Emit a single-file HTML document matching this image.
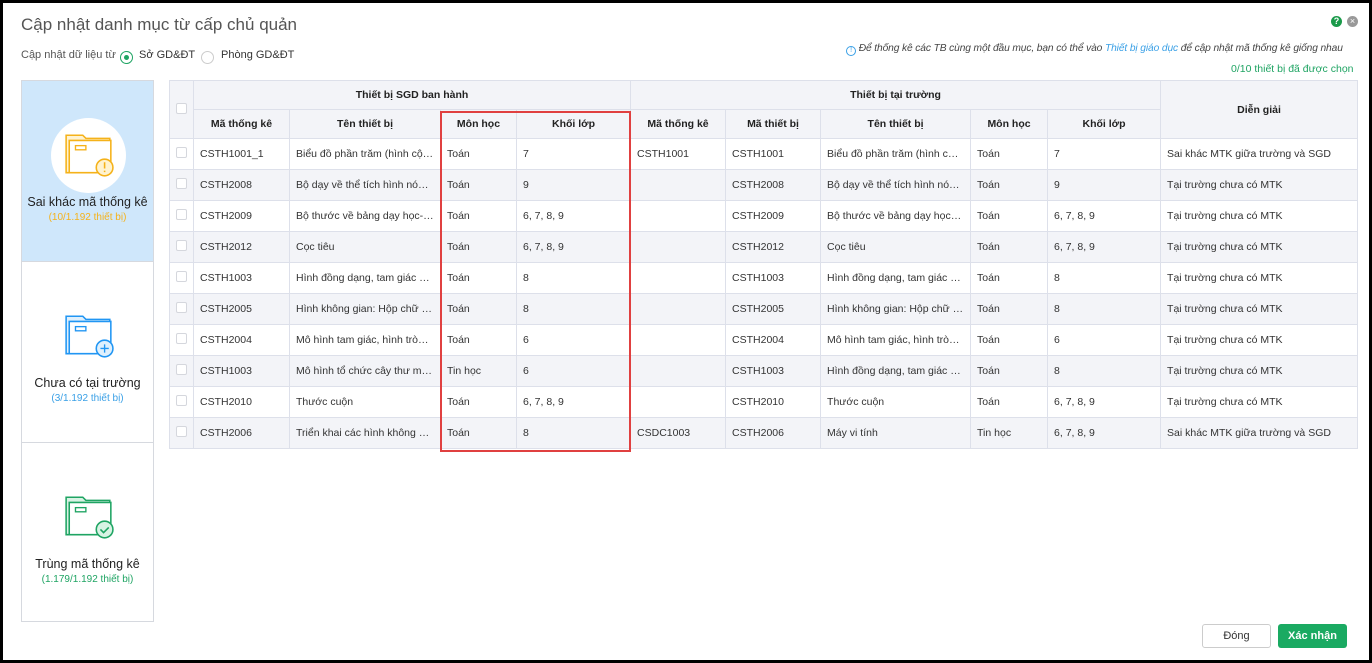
<!DOCTYPE html>
<html><head><meta charset="utf-8"><style>
*{box-sizing:border-box;margin:0;padding:0}
body{width:1372px;height:663px;background:#000;font-family:"Liberation Sans",sans-serif;position:relative;overflow:hidden}
.dlg{position:absolute;left:3px;top:3px;width:1366px;height:657px;background:#fff}
.abs{position:absolute}
.title{left:18px;top:12px;font-size:17px;color:#555}
.sub{font-size:11px;color:#555}
.radio{display:inline-block;width:13px;height:13px;border-radius:50%;border:1px solid #ccc;vertical-align:middle}
table{border-collapse:collapse;font-size:10.5px;color:#333;table-layout:fixed}
td,th{border:1px solid #dde0ea;height:31px;padding:0 6px;white-space:nowrap;overflow:hidden;text-overflow:ellipsis;text-align:left}
th{background:#f3f4f8;font-weight:bold;text-align:center;height:29px;color:#222;font-size:10.5px}
tr.alt td{background:#f3f4f8}
.cb{display:inline-block;width:11px;height:11px;border:1px solid #d5d7dd;border-radius:2px;background:#fff}
td.c{padding:0 6px}
.side{left:18px;top:77px;width:133px;height:542px;border:1px solid #d6d9df}
.sec{position:absolute;left:0;width:131px;height:180px;text-align:center}
.nm{font-size:12.5px;color:#222;position:absolute;left:0;width:100%}
.ct{font-size:10px;position:absolute;left:0;width:100%}
</style></head><body>
<div class="dlg">
<div class="abs title">Cập nhật danh mục từ cấp chủ quản</div>
<div class="abs sub" style="left:18px;top:46px">Cập nhật dữ liệu từ</div>
<div class="abs" style="left:117px;top:46px"><span class="radio" style="border-color:#1fa463;position:relative"><span style="position:absolute;left:3px;top:3px;width:5px;height:5px;border-radius:50%;background:#1fa463"></span></span></div>
<div class="abs sub" style="left:136px;top:46px;color:#333">Sở GD&amp;ĐT</div>
<div class="abs" style="left:198px;top:46px"><span class="radio"></span></div>
<div class="abs sub" style="left:218px;top:46px;color:#333">Phòng GD&amp;ĐT</div>
<div class="abs" style="left:1328px;top:13px;width:11px;height:11px;border-radius:50%;background:#1a9a4a;color:#fff;font-size:9px;font-weight:bold;text-align:center;line-height:11px">?</div>
<div class="abs" style="left:1344px;top:13px;width:11px;height:11px;border-radius:50%;background:#999;color:#fff;font-size:9px;text-align:center;line-height:11px">×</div>
<div class="abs" style="left:843px;top:40px;font-size:10.2px;letter-spacing:-0.1px;font-style:italic;color:#444;white-space:nowrap"><span style="display:inline-block;width:10px;height:10px;border:1px solid #3aa0e6;border-radius:50%;font-size:7px;color:#3aa0e6;text-align:center;line-height:8px;font-style:normal;vertical-align:-1px">!</span> Để thống kê các TB cùng một đầu mục, bạn có thể vào <span style="color:#3aa0e6">Thiết bị giáo dục</span> để cập nhật mã thống kê giống nhau</div>
<div class="abs" style="left:1228px;top:60px;font-size:10.5px;color:#1fa463">0/10 thiết bị đã được chọn</div>

<div class="abs side">
<div class="sec" style="top:0;background:#cfe7fb">
<div style="position:absolute;left:29px;top:37px;width:75px;height:75px;border-radius:50%;background:#fff"></div>
<svg class="abs" style="left:41px;top:51px" width="52" height="46" viewBox="0 0 50 44"><path d="M3 3h16l3 3h23v33H3z" fill="#fff3d0" stroke="#f5b21a" stroke-width="1.5"/><path d="M6 8h40v31H6z" fill="#fff" stroke="#f5b21a" stroke-width="1.5"/><rect x="12" y="13" width="10" height="4" fill="none" stroke="#f5b21a" stroke-width="1.3"/><circle cx="40" cy="34" r="8" fill="#fff3d0" stroke="#f5b21a" stroke-width="1.5"/><path d="M40 29v6M40 37v1.5" stroke="#f5b21a" stroke-width="1.5"/></svg>
<div class="nm" style="top:114px">Sai khác mã thống kê</div>
<div class="ct" style="top:131px;color:#f5b21a">(10/1.192 thiết bị)</div>
</div>
<div class="sec" style="top:180px;border-top:1px solid #d6d9df">
<svg class="abs" style="left:41px;top:51px" width="52" height="46" viewBox="0 0 50 44"><path d="M3 3h16l3 3h23v33H3z" fill="#dff0fd" stroke="#2196f3" stroke-width="1.5"/><path d="M6 8h40v31H6z" fill="#fff" stroke="#2196f3" stroke-width="1.5"/><rect x="12" y="13" width="10" height="4" fill="none" stroke="#2196f3" stroke-width="1.3"/><circle cx="40" cy="34" r="8" fill="#dff0fd" stroke="#2196f3" stroke-width="1.5"/><path d="M40 30v8M36 34h8" stroke="#2196f3" stroke-width="1.3"/></svg>
<div class="nm" style="top:114px">Chưa có tại trường</div>
<div class="ct" style="top:131px;color:#3aa0e6">(3/1.192 thiết bị)</div>
</div>
<div class="sec" style="top:361px;border-top:1px solid #d6d9df">
<svg class="abs" style="left:41px;top:51px" width="52" height="46" viewBox="0 0 50 44"><path d="M3 3h16l3 3h23v33H3z" fill="#d8f3e4" stroke="#1fa463" stroke-width="1.5"/><path d="M6 8h40v31H6z" fill="#fff" stroke="#1fa463" stroke-width="1.5"/><rect x="12" y="13" width="10" height="4" fill="none" stroke="#1fa463" stroke-width="1.3"/><circle cx="40" cy="34" r="8" fill="#d8f3e4" stroke="#1fa463" stroke-width="1.5"/><path d="M36 34l3 3 5-5" fill="none" stroke="#1fa463" stroke-width="1.5"/></svg>
<div class="nm" style="top:114px">Trùng mã thống kê</div>
<div class="ct" style="top:131px;color:#1fa463">(1.179/1.192 thiết bị)</div>
</div>
</div>

<table class="abs" style="left:166px;top:77px;width:1188px">
<colgroup><col style="width:24px"><col style="width:96px"><col style="width:151px"><col style="width:76px"><col style="width:114px"><col style="width:95px"><col style="width:95px"><col style="width:150px"><col style="width:77px"><col style="width:113px"><col style="width:197px"></colgroup>
<tr><th rowspan="2" style="padding:0 6px"><span class="cb"></span></th><th colspan="4">Thiết bị SGD ban hành</th><th colspan="5">Thiết bị tại trường</th><th rowspan="2">Diễn giải</th></tr>
<tr><th>Mã thống kê</th><th>Tên thiết bị</th><th>Môn học</th><th>Khối lớp</th><th>Mã thống kê</th><th>Mã thiết bị</th><th>Tên thiết bị</th><th>Môn học</th><th>Khối lớp</th></tr>
<tr><td class="c"><span class="cb"></span></td><td>CSTH1001_1</td><td>Biểu đồ phần trăm (hình cột,...</td><td>Toán</td><td>7</td><td>CSTH1001</td><td>CSTH1001</td><td>Biểu đồ phần trăm (hình cột,...</td><td>Toán</td><td>7</td><td>Sai khác MTK giữa trường và SGD</td></tr>
<tr class="alt"><td class="c"><span class="cb"></span></td><td>CSTH2008</td><td>Bộ dạy về thể tích hình nón, ...</td><td>Toán</td><td>9</td><td></td><td>CSTH2008</td><td>Bộ dạy về thể tích hình nón, ...</td><td>Toán</td><td>9</td><td>Tại trường chưa có MTK</td></tr>
<tr><td class="c"><span class="cb"></span></td><td>CSTH2009</td><td>Bộ thước về bảng dạy học- T...</td><td>Toán</td><td>6, 7, 8, 9</td><td></td><td>CSTH2009</td><td>Bộ thước về bảng dạy học- T...</td><td>Toán</td><td>6, 7, 8, 9</td><td>Tại trường chưa có MTK</td></tr>
<tr class="alt"><td class="c"><span class="cb"></span></td><td>CSTH2012</td><td>Cọc tiêu</td><td>Toán</td><td>6, 7, 8, 9</td><td></td><td>CSTH2012</td><td>Cọc tiêu</td><td>Toán</td><td>6, 7, 8, 9</td><td>Tại trường chưa có MTK</td></tr>
<tr><td class="c"><span class="cb"></span></td><td>CSTH1003</td><td>Hình đồng dạng, tam giác đồ...</td><td>Toán</td><td>8</td><td></td><td>CSTH1003</td><td>Hình đồng dạng, tam giác đồ...</td><td>Toán</td><td>8</td><td>Tại trường chưa có MTK</td></tr>
<tr class="alt"><td class="c"><span class="cb"></span></td><td>CSTH2005</td><td>Hình không gian: Hộp chữ n...</td><td>Toán</td><td>8</td><td></td><td>CSTH2005</td><td>Hình không gian: Hộp chữ n...</td><td>Toán</td><td>8</td><td>Tại trường chưa có MTK</td></tr>
<tr><td class="c"><span class="cb"></span></td><td>CSTH2004</td><td>Mô hình tam giác, hình tròn,...</td><td>Toán</td><td>6</td><td></td><td>CSTH2004</td><td>Mô hình tam giác, hình tròn,...</td><td>Toán</td><td>6</td><td>Tại trường chưa có MTK</td></tr>
<tr class="alt"><td class="c"><span class="cb"></span></td><td>CSTH1003</td><td>Mô hình tổ chức cây thư mục...</td><td>Tin học</td><td>6</td><td></td><td>CSTH1003</td><td>Hình đồng dạng, tam giác đồ...</td><td>Toán</td><td>8</td><td>Tại trường chưa có MTK</td></tr>
<tr><td class="c"><span class="cb"></span></td><td>CSTH2010</td><td>Thước cuộn</td><td>Toán</td><td>6, 7, 8, 9</td><td></td><td>CSTH2010</td><td>Thước cuộn</td><td>Toán</td><td>6, 7, 8, 9</td><td>Tại trường chưa có MTK</td></tr>
<tr class="alt"><td class="c"><span class="cb"></span></td><td>CSTH2006</td><td>Triển khai các hình không gi...</td><td>Toán</td><td>8</td><td>CSDC1003</td><td>CSTH2006</td><td>Máy vi tính</td><td>Tin học</td><td>6, 7, 8, 9</td><td>Sai khác MTK giữa trường và SGD</td></tr>
</table>
<div class="abs" style="left:437px;top:108px;width:191px;height:341px;border:2px solid #e04040"></div>

<div class="abs" style="left:1199px;top:621px;width:69px;height:24px;border:1px solid #ccc;border-radius:3px;font-size:11px;color:#333;text-align:center;line-height:22px">Đóng</div>
<div class="abs" style="left:1275px;top:621px;width:69px;height:24px;background:#1aaa62;border-radius:3px;font-size:11px;color:#fff;font-weight:bold;text-align:center;line-height:24px">Xác nhận</div>
</div>
</body></html>
